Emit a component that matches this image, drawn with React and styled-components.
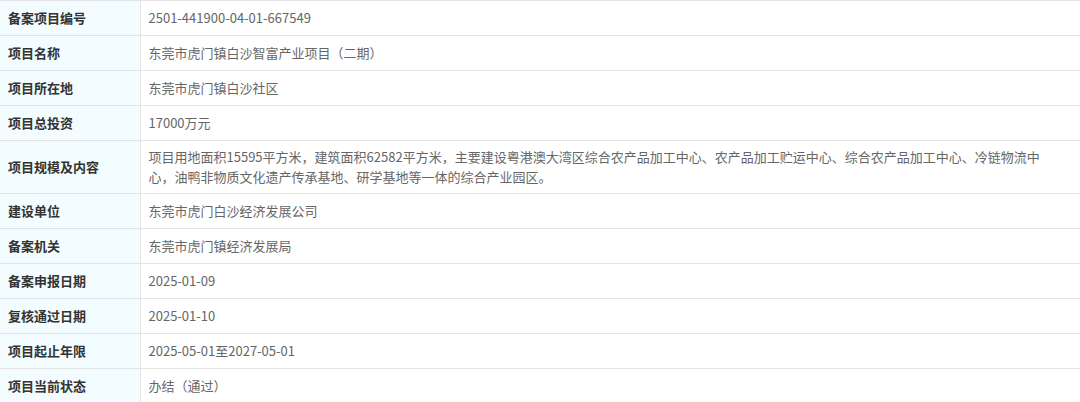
import React from "react";
import styled, { createGlobalStyle } from "styled-components";

const Global = createGlobalStyle`
  html, body { margin: 0; padding: 0; background: #fff; }
  body { font-family: "Noto Sans CJK SC", sans-serif; }
`;

const Table = styled.table`
  width: 1080px;
  border-collapse: collapse;
  table-layout: fixed;
  font-size: 13px;
  font-family: "Noto Sans CJK SC", sans-serif;
`;

const Row = styled.tr`
  height: ${(p) => (p.$tall ? 53 : 35)}px;
`;

const Label = styled.th`
  padding: 0 0 0 8px;
  background: #f3fcfe;
  border: 1px solid #e4e4e4;
  border-left: none;
  text-align: left;
  font-weight: bold;
  color: #333;
  line-height: 20px;
`;

const Value = styled.td`
  padding: 6px 22px 6px 8px;
  border: 1px solid #e4e4e4;
  border-right: none;
  color: #666;
  line-height: 20px;
  vertical-align: middle;
`;

const rows = [
  ["备案项目编号", "2501-441900-04-01-667549"],
  ["项目名称", "东莞市虎门镇白沙智富产业项目（二期）"],
  ["项目所在地", "东莞市虎门镇白沙社区"],
  ["项目总投资", "17000万元"],
  [
    "项目规模及内容",
    "项目用地面积15595平方米，建筑面积62582平方米，主要建设粤港澳大湾区综合农产品加工中心、农产品加工贮运中心、综合农产品加工中心、冷链物流中心，油鸭非物质文化遗产传承基地、研学基地等一体的综合产业园区。",
    true,
  ],
  ["建设单位", "东莞市虎门白沙经济发展公司"],
  ["备案机关", "东莞市虎门镇经济发展局"],
  ["备案申报日期", "2025-01-09"],
  ["复核通过日期", "2025-01-10"],
  ["项目起止年限", "2025-05-01至2027-05-01"],
  ["项目当前状态", "办结（通过）"],
];

export default function App() {
  return (
    <>
      <Global />
      <Table>
        <colgroup>
          <col style={{ width: 140 }} />
          <col />
        </colgroup>
        <tbody>
          {rows.map(([k, v, tall]) => (
            <Row key={k} $tall={tall}>
              <Label>{k}</Label>
              <Value>{v}</Value>
            </Row>
          ))}
        </tbody>
      </Table>
    </>
  );
}
